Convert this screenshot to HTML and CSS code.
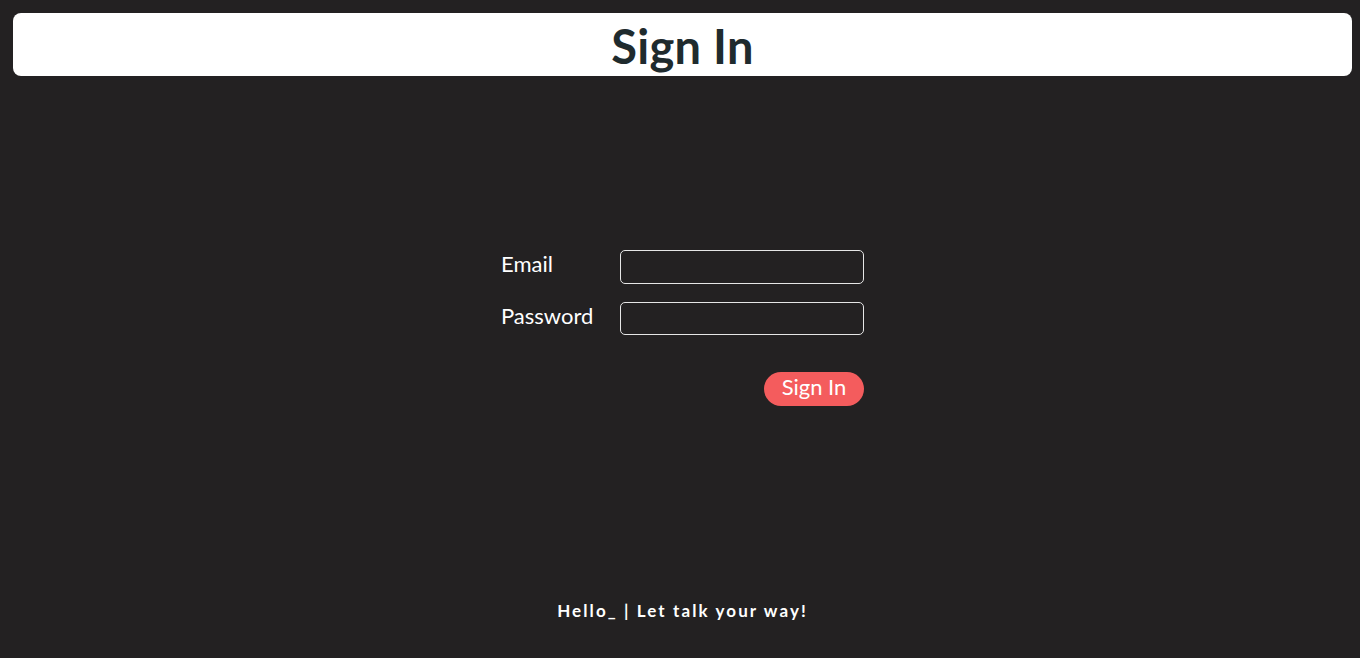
FILE: index.html
```html
<!DOCTYPE html>
<html lang="en">
<head>
<meta charset="utf-8">
<title>Sign In</title>
<link rel="stylesheet" href="styles.css">
</head>
<body>
<div class="page">
  <header class="topbar"><h1 class="title">Sign In</h1></header>
  <main class="main">
    <form class="form">
      <label class="label" for="email">Email</label>
      <input class="field" id="email" type="email">
      <label class="label" for="password">Password</label>
      <input class="field field-pass" id="password" type="password">
      <div class="actions"><button class="btn" type="button">Sign In</button></div>
    </form>
  </main>
  <footer class="footer">Hello_ | Let talk your way!</footer>
</div>
</body>
</html>
```
FILE: styles.css
```css
html, body { margin: 0; padding: 0; }
body {
  background: #232122;
  font-family: Lato, "Noto Sans", sans-serif;
  color: #fff;
}
.page {
  height: 658px;
  box-sizing: border-box;
  padding: 13px 8px 0 13px;
  display: flex;
  flex-direction: column;
}
.topbar {
  background: #fff;
  border-radius: 8px;
  height: 63px;
  display: flex;
  align-items: center;
  justify-content: center;
}
.title {
  margin: 0;
  font-size: 47px;
  font-weight: 700;
  color: #1f2b2e;
  line-height: 1;
  padding-top: 4px;
  letter-spacing: 0.3px;
}
.main {
  flex: 1;
  display: flex;
  justify-content: center;
  padding-top: 174px;
}
.form {
  display: grid;
  grid-template-columns: 119px 244px;
  row-gap: 18px;
  align-content: start;
  align-items: start;
}
.label {
  font-size: 22px;
  line-height: 1;
  padding-top: 3px;
}
.field {
  box-sizing: border-box;
  height: 34px;
  margin: 0;
  background: transparent;
  border: 1px solid #e6e6e6;
  border-radius: 5px;
  color: #fff;
}
.field-pass { height: 33px; }
.actions {
  grid-column: 2;
  display: flex;
  justify-content: flex-end;
  margin-top: 19px;
}
.btn {
  font-family: inherit;
  background: #f45c5d;
  color: #fff;
  border: none;
  border-radius: 17px;
  height: 34px;
  width: 100px;
  font-size: 22px;
  padding: 0 0 4px;
  line-height: 1;
}
.footer {
  text-align: center;
  font-size: 17px;
  font-weight: 700;
  letter-spacing: 2.1px;
  height: 58px;
}
```
